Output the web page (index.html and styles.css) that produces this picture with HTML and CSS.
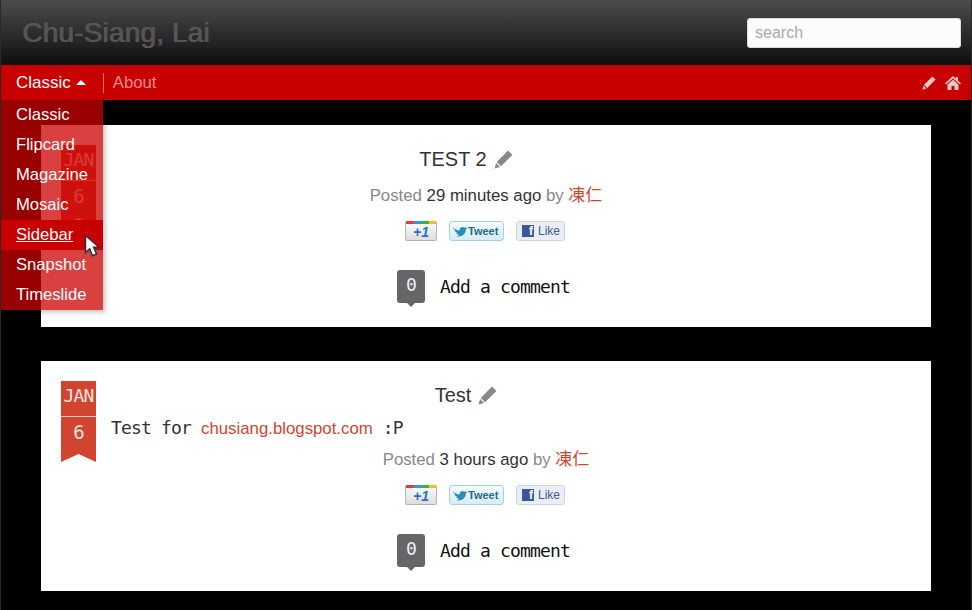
FILE: index.html
```html
<!DOCTYPE html>
<html lang="en">
<head>
  <meta charset="UTF-8">
  <meta name="viewport" content="width=device-width, initial-scale=1.0">
  <title>Chu-Siang, Lai</title>
  <link rel="stylesheet" href="styles.css">
</head>
<body>

  <!-- Header -->
  <header class="top">
    <h1 class="site-title">Chu-Siang, Lai</h1>
    <input class="search" type="text" placeholder="search">
  </header>

  <!-- Nav bar -->
  <nav class="navbar">
    <a class="nav-link nav-current" href="#">Classic <span class="caret"></span></a>
    <span class="nav-sep"></span>
    <a class="nav-link nav-about" href="#">About</a>
    <span class="nav-icons">
      <svg class="nav-icon" viewBox="0 0 14 14"><path d="M10.400 .4l3.200 3.200-8.400 8.400-3.200-3.200zM1.500 9.500l3 3-4.100 1.200z"/></svg>
      <svg class="nav-icon nav-home" viewBox="0 0 16 14"><path d="M8 0l2.800 2.500V1H13v3.500l3 2.700-1 1.200L8 2.400 1 8.400 0 7.200zM2.500 8.500L8 3.800l5.500 4.700V14H9.500V10h-3v4h-4z"/></svg>
    </span>
    <ul class="dropdown">
      <li><a href="#">Classic</a></li>
      <li><a href="#">Flipcard</a></li>
      <li><a href="#">Magazine</a></li>
      <li><a href="#">Mosaic</a></li>
      <li class="hover"><a href="#">Sidebar</a></li>
      <li><a href="#">Snapshot</a></li>
      <li><a href="#">Timeslide</a></li>
    </ul>
    <svg class="cursor" viewBox="0 0 16 24"><path d="M1.500 1.500v17l4.200-3.800 2.800 7 4-1.700-2.900-6.700h5.400z"/></svg>
  </nav>

  <main class="posts">

    <article class="post">
      <div class="date"><span class="month">JAN</span><span class="day">6</span></div>
      <h2 class="post-title">TEST 2<svg class="edit" viewBox="0 0 14 14"><path d="M10.400 .4l3.200 3.200-8.400 8.400-3.200-3.200zM1.500 9.500l3 3-4.100 1.200z"/></svg></h2>
      <p class="meta">Posted <span class="when">29 minutes ago</span> by <a href="#">凍仁</a></p>
      <div class="share">
        <span class="btn-plus"><i>+1</i></span>
        <span class="btn-tweet"><svg class="bird" viewBox="0 0 16 12"><path d="M0 1.500c2 2 4 3 7 3.300 0-3 3-5 5-3l2.500-.8-1.200 1.800 2.200-.5-1.700 1.900C13.800 9 9 13 2.500 11c2 0 3.500-.5 4.500-1.500-2 0-3-1-3.500-2H5C3 7 1.500 5.500 1.500 4L3 4.500C1.500 4 0 3 0 1.500z"/></svg>Tweet</span>
        <span class="btn-like"><b class="fb">f</b>Like</span>
      </div>
      <div class="comments"><span class="count">0</span><span class="add">Add a comment</span></div>
    </article>

    <article class="post">
      <div class="date"><span class="month">JAN</span><span class="day">6</span></div>
      <h2 class="post-title">Test<svg class="edit" viewBox="0 0 14 14"><path d="M10.400 .4l3.200 3.200-8.400 8.400-3.200-3.200zM1.500 9.500l3 3-4.100 1.200z"/></svg></h2>
      <p class="body-text">Test for <a href="#">chusiang.blogspot.com</a> :P</p>
      <p class="meta">Posted <span class="when">3 hours ago</span> by <a href="#">凍仁</a></p>
      <div class="share">
        <span class="btn-plus"><i>+1</i></span>
        <span class="btn-tweet"><svg class="bird" viewBox="0 0 16 12"><path d="M0 1.500c2 2 4 3 7 3.300 0-3 3-5 5-3l2.500-.8-1.200 1.800 2.200-.5-1.700 1.900C13.800 9 9 13 2.500 11c2 0 3.500-.5 4.500-1.500-2 0-3-1-3.500-2H5C3 7 1.500 5.500 1.500 4L3 4.500C1.500 4 0 3 0 1.500z"/></svg>Tweet</span>
        <span class="btn-like"><b class="fb">f</b>Like</span>
      </div>
      <div class="comments"><span class="count">0</span><span class="add">Add a comment</span></div>
    </article>

  </main>

</body>
</html>
```

FILE: styles.css
```css
* { margin: 0; padding: 0; box-sizing: border-box; }
html, body { height: 100%; overflow: hidden; }
body {
  font-family: "Liberation Sans", Arial, sans-serif;
  background: #000;
  border-left: 1px solid #2a2a2a;
  border-right: 1px solid #2a2a2a;
}
a { text-decoration: none; }

/* header */
.top {
  height: 65px;
  padding: 18px 10px 0 21px;
  display: flex;
  justify-content: space-between;
  align-items: flex-start;
  background: linear-gradient(#4c4c4c, #0e0e0e);
}
.site-title {
  font-size: 28px;
  line-height: 30px;
  font-weight: normal;
  color: #555;
  text-shadow: 1px 0 0 #555;
  letter-spacing: .15px;
}
.search {
  width: 214px;
  height: 30px;
  padding: 0 7px;
  font-family: inherit;
  font-size: 16px;
  color: #333;
  background: #fcfcfc;
  border: 1px solid #ddd;
  border-radius: 3px;
  outline: none;
}
.search::placeholder { color: #aaa; opacity: 1; }

/* nav bar */
.navbar {
  position: relative;
  height: 35px;
  padding-left: 15px;
  display: flex;
  align-items: center;
  background: #c80000;
  font-size: 17px;
}
.nav-link { color: #fff; }
.nav-current { display: flex; align-items: center; gap: 5px; }
.caret {
  width: 0;
  height: 0;
  border-left: 5px solid transparent;
  border-right: 5px solid transparent;
  border-bottom: 5px solid #fff;
}
.nav-sep {
  width: 1px;
  height: 20px;
  margin: 0 9px 0 17px;
  background: #e87070;
}
.nav-about { color: #f08c8c; font-size: 16.700px; }
.nav-icons {
  margin-left: auto;
  padding-right: 10px;
  display: flex;
  align-items: center;
  gap: 9px;
}
.nav-icon { width: 14px; height: 14px; fill: #f5c4c4; }
.nav-home { width: 16px; }

.dropdown {
  position: absolute;
  top: 35px;
  left: 0;
  width: 102px;
  list-style: none;
  font-size: 16.600px;
  background: rgba(204, 0, 0, .75);
  box-shadow: 2px 2px 5px rgba(0, 0, 0, .25);
  z-index: 5;
}
.dropdown li { height: 30px; line-height: 29px; padding-left: 15px; }
.dropdown a { color: #fff; }
.dropdown .hover { background: #c80000; }
.dropdown .hover a { text-decoration: underline; }
.cursor {
  position: absolute;
  top: 169px;
  left: 83px;
  width: 16px;
  height: 24px;
  fill: #fff;
  stroke: #333;
  stroke-width: 1.500;
  z-index: 6;
}

/* posts */
.posts {
  padding: 25px 40px 0;
  display: flex;
  flex-direction: column;
  gap: 34px;
}
.post {
  position: relative;
  padding: 20px 20px 20px;
  background: #fff;
  color: #333;
}
.date {
  position: absolute;
  top: 20px;
  left: 20px;
  width: 35px;
  height: 81px;
  display: flex;
  flex-direction: column;
  align-items: center;
  background: #d14530;
  color: #f6e6e0;
  font-family: "DejaVu Sans Mono", monospace;
  font-size: 18px;
  letter-spacing: -.83px;
  clip-path: polygon(0 0, 100% 0, 100% 100%, 50% 90%, 0 100%);
}
.month {
  width: 100%;
  height: 36px;
  line-height: 30px;
  text-align: center;
  border-bottom: 1px solid #f0c4b8;
}
.day { line-height: 31px; font-size: 19px; }
.post-title {
  height: 28px;
  padding-right: 40px;
  display: flex;
  justify-content: center;
  align-items: center;
  gap: 7px;
  font-size: 20px;
  line-height: 28px;
  font-weight: normal;
}
.edit { width: 19px; height: 19px; fill: #888; }
.body-text {
  height: 28px;
  margin-top: 4px;
  padding-left: 50px;
  font-family: "DejaVu Sans Mono", monospace;
  font-size: 18px;
  letter-spacing: -.83px;
  line-height: 30px;
}
.body-text a {
  font-family: "Liberation Sans", Arial, sans-serif;
  font-size: 16.800px;
  letter-spacing: 0;
  color: #d14530;
}
.meta {
  text-align: center;
  font-size: 16.800px;
  line-height: 24px;
  color: #888;
}
.post-title + .meta { margin-top: 11px; }
.body-text + .meta { margin-top: 7px; }
.when { color: #333; }
.meta a {
  color: #d14530;
  font-family: "Liberation Sans", "Noto Sans CJK TC", sans-serif;
  font-size: 17px;
}

/* share buttons */
.share {
  margin-top: 13px;
  padding-right: 2px;
  display: flex;
  justify-content: center;
  gap: 12px;
  height: 20px;
}
.btn-plus {
  width: 32px;
  height: 20px;
  border: 1px solid #b5b5b5;
  border-top: 0;
  border-radius: 2px;
  text-align: center;
  background:
    linear-gradient(90deg, #dd3b3b 25%, #2b9be0 25%, #2b9be0 50%, #3fb043 50%, #3fb043 75%, #f4c020 75%) top / 100% 3px no-repeat,
    linear-gradient(#fff, #ddd);
}
.btn-plus i {
  font-size: 14px;
  line-height: 22px;
  font-weight: bold;
  color: #2a6fc9;
}
.btn-tweet, .btn-like {
  height: 20px;
  display: flex;
  align-items: center;
  border-radius: 3px;
}
.btn-tweet {
  width: 55px;
  padding-left: 3px;
  gap: 0;
  font-size: 11px;
  font-weight: bold;
  color: #1f6a88;
  border: 1px solid #a8cfe2;
  background: linear-gradient(#f4fbfe, #d6ecf7);
}
.bird { width: 15px; height: 11px; fill: #2a8cb8; }
.btn-like {
  width: 49px;
  padding-left: 5px;
  gap: 4px;
  font-size: 12px;
  color: #3b5a9a;
  border: 1px solid #cad4e7;
  background: #eceef5;
}
.fb {
  width: 12px;
  height: 12px;
  padding-right: 1px;
  text-align: right;
  font-size: 12px;
  line-height: 13px;
  color: #fff;
  background: #3b5998;
}

/* comments */
.comments {
  margin-top: 29px;
  height: 37px;
  display: flex;
  justify-content: center;
  gap: 15px;
  padding-right: 5px;
  font-family: "DejaVu Sans Mono", monospace;
  font-size: 18px;
  letter-spacing: -.83px;
  color: #111;
}
.count {
  position: relative;
  width: 28px;
  height: 33px;
  line-height: 30px;
  text-align: center;
  color: #eef;
  background: #666;
  border-radius: 3px;
}
.count::after {
  content: "";
  position: absolute;
  left: 10px;
  bottom: -4px;
  border-left: 4px solid transparent;
  border-right: 4px solid transparent;
  border-top: 4px solid #666;
}
.add { line-height: 33px; }
```
